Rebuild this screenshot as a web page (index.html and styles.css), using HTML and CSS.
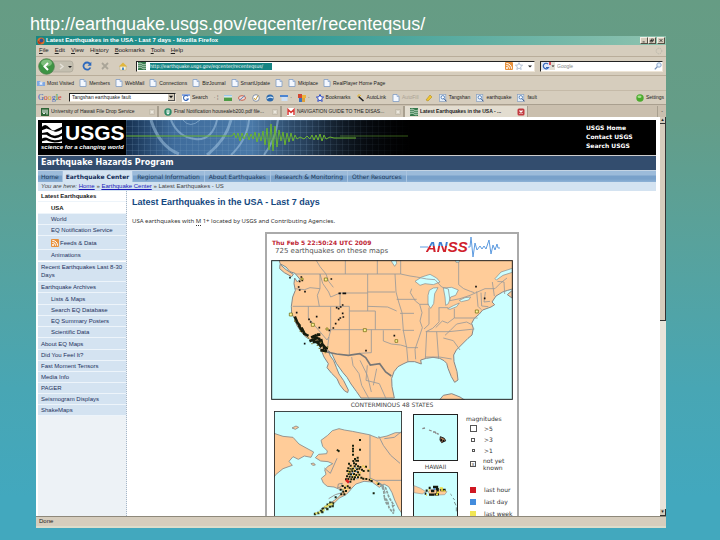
FILE: index.html
```html
<!DOCTYPE html>
<html lang="en">
<head>
<meta charset="utf-8">
<title>Latest Earthquakes in the USA</title>
<link rel="stylesheet" href="styles.css">
</head>
<body>
<svg class="defs" width="0" height="0" aria-hidden="true">
  <symbol id="doc" viewBox="0 0 8 8"><path d="M1 .5h4l2 2v5H1z" fill="#f4f8ff" stroke="#7f9cc4" stroke-width=".8"/><path d="M5 .5v2h2" fill="#c5d6ee" stroke="#7f9cc4" stroke-width=".6"/></symbol>
  <symbol id="rss" viewBox="0 0 8 8"><rect width="8" height="8" rx="1" fill="#e8913c"/><circle cx="2" cy="6" r="1" fill="#fff"/><path d="M1.3 3.4a3.3 3.3 0 0 1 3.3 3.3M1.3 1.4a5.3 5.3 0 0 1 5.3 5.3" fill="none" stroke="#fff"/></symbol>
  <symbol id="find" viewBox="0 0 8 8"><rect x=".4" y=".4" width="6.4" height="7" fill="#e3edf8" stroke="#8aa0c0" stroke-width=".7"/><circle cx="3.8" cy="3.3" r="1.7" fill="#fff" stroke="#3c6fae" stroke-width=".8"/><path d="M5 4.6 7.4 7.3" stroke="#2c4f88"/></symbol>
  <symbol id="gbox" viewBox="0 0 8 8"><rect width="8" height="8" fill="#fff"/><path d="M0 0h8v2H0z" fill="#8ba8e0"/><path d="M6 2.4A2.5 2.5 0 1 0 6.3 5H4.4" fill="none" stroke="#3465b8" stroke-width="1.1"/></symbol>
  <symbol id="usgs" viewBox="0 0 8 8"><rect width="8" height="8" fill="#35784b"/><path d="M0 2q2-2 4 0t4 0M0 4q2-2 4 0t4 0M0 6q2-2 4 0t4 0" fill="none" stroke="#d5ead9" stroke-width=".8"/></symbol>
  <symbol id="close" viewBox="0 0 6 6"><rect x=".4" y=".4" width="5.2" height="5.2" rx="1" fill="#d9d3c6" stroke="#b3ab9b" stroke-width=".6"/><path d="m2 2 2 2m0-2-2 2" stroke="#f4f0e8" stroke-width=".7"/></symbol>
</svg>

<h1 class="slide-title">http://earthquake.usgs.gov/eqcenter/recenteqsus/</h1>

<div class="window">
  <header class="titlebar">
    <svg class="i8" viewBox="0 0 8 8"><circle cx="4" cy="4" r="3.600" fill="#e0702a"/><circle cx="4.500" cy="3.500" r="2" fill="#35508f"/><path d="M.6 3Q2 5 5 5.500Q3 8 1 6z" fill="#b33a1c"/></svg>
    <span class="caption">Latest Earthquakes in the USA - Last 7 days - Mozilla Firefox</span>
    <button aria-label="Minimize"><svg viewBox="0 0 8 7"><path d="M2 5.500h3" stroke="#111"/></svg></button>
    <button aria-label="Restore"><svg viewBox="0 0 8 7"><path d="M3 1.500h3v2.500H3zM1.500 3.500h3v2H1.500z" fill="none" stroke="#111" stroke-width=".9"/></svg></button>
    <button class="x" aria-label="Close window"><svg viewBox="0 0 8 7"><path d="m2 1.500 4 4m0-4-4 4" stroke="#111"/></svg></button>
  </header>

  <nav class="menubar">
    <button><u>F</u>ile</button><button><u>E</u>dit</button><button><u>V</u>iew</button><button>Hi<u>s</u>tory</button><button><u>B</u>ookmarks</button><button><u>T</u>ools</button><button><u>H</u>elp</button>
    <svg class="i8 end" viewBox="0 0 8 8"><circle cx="4" cy="4" r="2.800" fill="none" stroke="#b9b6aa" stroke-width="1" stroke-dasharray="1.200 .8"/></svg>
  </nav>

  <div class="navbar">
    <button class="back" aria-label="Back and forward"><svg viewBox="0 0 36 17"><rect x="8" y="3" width="27" height="11" rx="3" fill="#c4bfb0" stroke="#aaa596" stroke-width=".7"/><circle cx="8.500" cy="8.500" r="7.800" fill="#3d9444" stroke="#4d7f4c" stroke-width=".8"/><ellipse cx="8.500" cy="5" rx="5.500" ry="3.500" fill="#7dbe7c"/><path d="m10 5-3.500 3.500L10 12" fill="none" stroke="#fff" stroke-width="2"/><path d="m22 6 3 2.500-3 2.500" fill="none" stroke="#e5e2d9" stroke-width="1.500"/><path d="M30 8h4l-2 2z" fill="#222"/></svg></button>
    <button aria-label="Reload"><svg viewBox="0 0 10 10"><path d="M8 3A3.600 3.600 0 1 0 8.400 6.500" fill="none" stroke="#2e69bd" stroke-width="1.800"/><path d="M9.300.8v4H5.500z" fill="#2e69bd"/></svg></button>
    <button aria-label="Stop"><svg viewBox="0 0 10 10"><path d="m2 2 6 6m0-6-6 6" stroke="#aaa598" stroke-width="1.800"/></svg></button>
    <button aria-label="Home"><svg viewBox="0 0 10 10"><path d="M2 5h6v4H2z" fill="#f9f3da" stroke="#b7a976" stroke-width=".5"/><path d="M.8 5.500 5 1.500l4.200 4z" fill="#e0b63e"/><path d="M4 6.500h2V9H4z" fill="#4e8cc4"/></svg></button>
    <div class="field address">
      <svg class="i8" viewBox="0 0 8 8"><use href="#usgs"/></svg>
      <input type="text" aria-label="Address" value="http://earthquake.usgs.gov/eqcenter/recenteqsus/">
      <svg class="i8 end" viewBox="0 0 8 8"><use href="#rss"/></svg>
      <svg class="i8" viewBox="0 0 8 8"><path d="m4 .6 1 2.400 2.600.2-2 1.700.6 2.600L4 6.100 1.800 7.500l.6-2.600-2-1.700L3 3z" fill="#fff" stroke="#8ba0bd" stroke-width=".6"/></svg>
      <svg class="i8" viewBox="0 0 8 8"><path d="M3 3.500h4l-2 2z" fill="#222"/></svg>
    </div>
    <div class="field search">
      <svg class="gpick" viewBox="0 0 14 8"><rect width="14" height="8" fill="#e4dfd4"/><rect x="1" width="8" height="8" fill="#dfe7f8"/><path d="M7 2A2.800 2.800 0 1 0 7.500 5.500H5" fill="none" stroke="#3465b8" stroke-width="1.200"/><path d="M8 0h2v3H8z" fill="#d64d5c"/><path d="M10.500 3.500h3L12 5z" fill="#222"/></svg>
      <input type="text" aria-label="Search the web" placeholder="Google">
      <svg class="i8" viewBox="0 0 8 8"><circle cx="5" cy="3" r="2.200" fill="#e6f0fb" stroke="#8da7cc"/><path d="M3.300 4.700.8 7.400" stroke="#7892b8" stroke-width="1.300"/></svg>
    </div>
  </div>

  <nav class="bookmarks">
    <a href="#"><svg class="i8" viewBox="0 0 8 8"><path d="M0 2h3l1 1h4v4H0z" fill="#7fa8e2"/><path d="m4 2 .7 1.500 1.600.1-1.200 1 .4 1.600L4 5.400l-1.500.8.4-1.600-1.200-1 1.600-.1z" fill="#e4edfb"/></svg>Most Visited</a>
    <a href="#"><svg class="i8"><use href="#doc"/></svg>Members</a>
    <a href="#"><svg class="i8"><use href="#doc"/></svg>WebMail</a>
    <a href="#"><svg class="i8"><use href="#doc"/></svg>Connections</a>
    <a href="#"><svg class="i8"><use href="#doc"/></svg>BizJournal</a>
    <a href="#"><svg class="i8"><use href="#doc"/></svg>SmartUpdate</a>
    <a href="#" aria-label="Untitled bookmark"><svg class="i8"><use href="#doc"/></svg></a>
    <a href="#"><svg class="i8"><use href="#doc"/></svg>Mktplace</a>
    <a href="#"><svg class="i8"><use href="#doc"/></svg>RealPlayer Home Page</a>
  </nav>

  <div class="googlebar">
    <span class="glogo"><b class="b">G</b><b class="r">o</b><b class="y">o</b><b class="b">g</b><b class="g">l</b><b class="r">e</b></span>
    <div class="field query"><input type="text" aria-label="Google query" value="Tangshan earthquake fault"><button aria-label="Show history"><svg viewBox="0 0 7 7"><path d="M1 2h5L3.500 5z" fill="#111"/></svg></button></div>
    <button><svg class="i8"><use href="#gbox"/></svg>Search</button>
    <span class="sep">· ¦</span>
    <button aria-label="News"><svg class="i8" viewBox="0 0 8 8"><path d="M0 1.500h8v5H0z" fill="#fff"/><path d="M0 3.500h8v3.500H0z" fill="#4d9b45"/><path d="M0 1h8v1.500H0z" fill="#9cc8e8"/></svg></button>
    <button aria-label="Popups"><svg class="i8" viewBox="0 0 8 8"><ellipse cx="4" cy="4" rx="3.500" ry="2.300" fill="#f5dcd6" stroke="#c65f4c"/><path d="M1 6.500 7 1.500" stroke="#5c8ac0"/></svg></button>
    <button aria-label="PageRank"><svg class="i8" viewBox="0 0 8 8"><circle cx="4" cy="4" r="3.300" fill="#fff" stroke="#6c7e9a" stroke-width=".8"/><path d="m2 4 1.500 2L6 1.500" fill="none" stroke="#c79a36"/></svg></button>
    <button aria-label="Earth"><svg class="i8" viewBox="0 0 8 8"><circle cx="4" cy="4" r="3.600" fill="#2e6bad"/><path d="M1 4.500Q4 2 7 4" stroke="#d1e6f7" stroke-width="1.300" fill="none"/></svg></button>
    <button aria-label="Send"><svg class="i8" viewBox="0 0 8 8"><path d="M0 1h8v2H0z" fill="#4c84d0"/><path d="M1.500 3h6v4h-6z" fill="#cfe0f4"/></svg>·</button>
    <button aria-label="Photos"><svg class="i8" viewBox="0 0 8 8"><path d="M0 0h4v4H0z" fill="#d24632"/><path d="M4 1h4v3H4z" fill="#ecb33a"/><path d="M1 4h3v4H1z" fill="#3e73bd"/><path d="M4 4h3v4H4z" fill="#dfa03a"/></svg>·</button>
    <button><svg class="i8" viewBox="0 0 8 8"><path d="m4 .5 1.100 2.300 2.500.3-1.900 1.700.5 2.600L4 6.100 1.800 7.400l.5-2.600L.4 3.100l2.500-.3z" fill="#fff" stroke="#2746c4"/></svg>Bookmarks</button>
    <button><svg class="i8" viewBox="0 0 8 8"><path d="m1.500 2.500 5 4.500" stroke="#222" stroke-width="1.600"/><path d="M2 0v2M0 2h2M4 1 3 2" stroke="#e2b331"/></svg>AutoLink</button>
    <button class="off"><svg class="i8"><use href="#doc"/></svg>AutoFill</button>
    <button aria-label="Highlight"><svg class="i8" viewBox="0 0 8 8"><path d="M1 6 5 1l2 2-4 4z" fill="#f0c531" stroke="#b08d23" stroke-width=".6"/></svg></button>
    <button><svg class="i8"><use href="#find"/></svg>Tangshan</button>
    <button><svg class="i8"><use href="#find"/></svg>earthquake</button>
    <button><svg class="i8"><use href="#find"/></svg>fault</button>
    <button class="end"><svg class="i8" viewBox="0 0 8 8"><circle cx="4" cy="4" r="3.700" fill="#4bab2e"/><ellipse cx="3.500" cy="2.700" rx="2" ry="1.300" fill="#a9e08f"/></svg>Settings</button>
  </div>

  <nav class="tabs">
    <a href="#"><svg class="i8" viewBox="0 0 8 8"><rect width="8" height="8" fill="#2c6434"/><path d="M2 1.500V5q1 1.500 2 0V1.500M6 1.500v5" stroke="#fff" fill="none"/></svg><span>University of Hawaii File Drop Service</span><svg class="i6"><use href="#close"/></svg></a>
    <a href="#"><svg class="i8" viewBox="0 0 8 8"><circle cx="4" cy="4" r="3.700" fill="#2e8a67"/><path d="M4 1.500v5M3 2v3.500h2V2" stroke="#fff" stroke-width=".8" fill="none"/></svg><span>Final Notification housealeb200.pdf file...</span><svg class="i6"><use href="#close"/></svg></a>
    <a href="#"><svg class="i8" viewBox="0 0 8 8"><rect width="8" height="8" fill="#fff"/><path d="M1 7V1.500l3 3 3-3V7" stroke="#d83a36" stroke-width="1.500" fill="none"/></svg><span>NAVIGATION GUIDE TO THE DISAS...</span><svg class="i6"><use href="#close"/></svg></a>
    <a href="#" class="on"><svg class="i8"><use href="#usgs"/></svg><span>Latest Earthquakes in the USA - ...</span><svg class="i8" viewBox="0 0 8 8"><rect x=".5" y=".5" width="7" height="7" rx="1.500" fill="#c23a40"/><path d="m2.500 2.500 3 3m0-3-3 3" stroke="#fff" stroke-width="1.200"/></svg></a>
    <button class="end" aria-label="List tabs">-</button>
  </nav>

  <div class="viewport">
    <div class="page">
      <header class="banner">
        <div class="logo">
          <div class="mark"><svg viewBox="0 0 22 22"><rect width="22" height="22" fill="#fff"/><path d="M0 4q4-4 8 1t8 2l6-3v3q-5 4-9 2T5 6L0 8zM0 11l6-1q4 4 8 4t8-3v3q-6 4-11 2t-6-3H0zM0 17q4-2 7 0t7 2 8-1v2q-7 2-11 1t-6-2L0 20z" fill="#000"/></svg><strong>USGS</strong></div>
          <em>science for a changing world</em>
        </div>
        <svg class="wave" viewBox="0 0 300 35">
          <defs>
            <linearGradient id="sky"><stop offset="0" stop-color="#152f4e"/><stop offset=".16" stop-color="#3f6c9c"/><stop offset=".42" stop-color="#4a79a8"/><stop offset=".56" stop-color="#2c4866"/><stop offset=".8" stop-color="#101a26"/><stop offset="1" stop-color="#000"/></linearGradient>
            <pattern id="grid" width="6" height="6" patternUnits="userSpaceOnUse"><path d="M0 .5h6M.5 0v6" stroke="#88aac8" stroke-opacity=".28" stroke-width=".6"/></pattern>
            <linearGradient id="fade"><stop offset=".6" stop-color="#000" stop-opacity="0"/><stop offset=".95" stop-color="#000"/></linearGradient>
          </defs>
          <rect width="300" height="35" fill="url(#sky)"/>
          <rect width="300" height="35" fill="url(#grid)"/>
          <g fill="none" stroke="#a8c9e6" stroke-opacity=".5"><path d="M45 0Q52 17 69 19T91 0" stroke-width="2"/><path d="M25 0Q33 26 53 34M81 35Q100 20 105 0" stroke-width="3"/><path d="M57 0q7 9 17 0"/><path d="M105 35Q121 20 123 0M138 35q12-16 14-35" stroke-width="2"/></g>
          <rect width="300" height="35" fill="url(#fade)"/>
          <path d="M0 16h106l2-3 2 5 2-5 2 8 2-8 2 6 3-6 2 7 2-6 2 5 2-7 2 10 2-9 2 8 2-10 2 14 2-17 2 22 2-26 2 27 2-25 2 21 2-17 2 11 2-9 2 13 2-12 2 9 2-9 2 8 2-6 2 4 3-2 4 2 3-3 3 3 2-4 2 5 2-5 2 5 2-6 2 7 2-6 2 4 4-2 4 1h22" fill="none" stroke="#6bb52f"/>
          <path d="M214 16h68" stroke="#6bb52f" stroke-opacity=".5"/>
        </svg>
        <nav class="quick"><a href="#">USGS Home</a><a href="#">Contact USGS</a><a href="#">Search USGS</a></nav>
      </header>
      <div class="program">Earthquake Hazards Program</div>
      <nav class="sections"><a href="#">Home</a><a href="#" class="on">Earthquake Center</a><a href="#">Regional Information</a><a href="#">About Earthquakes</a><a href="#">Research &amp; Monitoring</a><a href="#">Other Resources</a></nav>
      <div class="crumbs"><i>You are here:</i> <a href="#">Home</a> » <a href="#">Earthquake Center</a> » Latest Earthquakes - US</div>
      <div class="columns">
        <nav class="side">
          <ul>
            <li class="head"><a href="#">Latest Earthquakes</a>
              <ul>
                <li class="here"><a href="#">USA</a></li>
                <li><a href="#">World</a></li>
                <li><a href="#">EQ Notification Service</a></li>
                <li class="feed"><a href="#"><svg class="i8"><use href="#rss"/></svg>Feeds &amp; Data</a></li>
                <li><a href="#">Animations</a></li>
              </ul></li>
            <li class="tall"><a href="#">Recent Earthquakes Last 8-30 Days</a></li>
            <li><a href="#">Earthquake Archives</a>
              <ul>
                <li><a href="#">Lists &amp; Maps</a></li>
                <li><a href="#">Search EQ Database</a></li>
                <li><a href="#">EQ Summary Posters</a></li>
                <li><a href="#">Scientific Data</a></li>
              </ul></li>
            <li><a href="#">About EQ Maps</a></li>
            <li><a href="#">Did You Feel It?</a></li>
            <li><a href="#">Fast Moment Tensors</a></li>
            <li><a href="#">Media Info</a></li>
            <li><a href="#">PAGER</a></li>
            <li><a href="#">Seismogram Displays</a></li>
            <li><a href="#">ShakeMaps</a></li>
          </ul>
        </nav>
        <main>
          <h2>Latest Earthquakes in the USA - Last 7 days</h2>
          <p>USA earthquakes with <abbr title="Magnitude">M</abbr> 1+ located by USGS and Contributing Agencies.</p>
          <section class="panel">
            <header>
              <div><strong>Thu Feb 5 22:50:24 UTC 2009</strong><span>725 earthquakes on these maps</span></div>
              <div class="anss"><svg viewBox="0 0 80 22"><path d="M0 11h8M48 11h2l1-10 2 20 2-14 2 7 3-4 2 3 2-3 2 3 3-9 2 14 2-9 2 5 2-6 1 4h2" fill="none" stroke="#5d9be0"/></svg><b><span>AN</span>SS</b></div>
            </header>
            <svg class="us" viewBox="33 94 726 420">
              <rect x="33" y="94" width="726" height="420" fill="#cff"/>
              <g fill="#fc9" stroke="#888" stroke-width="3" stroke-linejoin="round">
                <path d="M57 90l3 15 18 10 12 14 15 5 15 18-8 8-8-12-2 17 4 20-8 20-4 28 1 22 8 14 7 20 13 20 13 15 22 13 20 6 5 20 9 22 13 20-4 12 14 17 16 16 8 18 14 18 10 6 2-8-14-28-14-20-8-20-8-20-10-14-6-16 10 8 14 30 20 28 12 14 12 20 16 22 14 20h100l-7-34-1-25 7-20 12-15 15-8 15-7 20 0 20 7-2-12 17-5 20-3 20 3 13 7 8 8 4 15 10 25 10 17 10-7-3-25-9-30-1-20 8-15 15-15 20-20 12-10 4-20-5-15 8-15 15-13 10-12 25-9 11-7-8-8 12-18 20-12 15-5 22-6V90z"/>
                <path d="M535 518l15-18 25-5 25 10 20 13zM60 107l18 16 22 14-5 7-22-12-14-12z"/>
                <path d="M742 198l14-12v22z"/>
              </g>
              <g fill="#cff" stroke="#888" stroke-width="2">
                <path d="M465 158l20-13 25-8 20 11 10 12-20 8-25-3-15 5zM508 185l12-7 14-1-10 18-3 30-9 14-8-12v-27zM550 178l25-2 20 8-8 16-15 5-7 20-8 5-2-25zM563 240l17-9 18-8-8 11-20 8zM598 215l17-8 17-2-6 9-22 5zM705 150l18-20 34-11v12l-28 9-20 14zM394 98l10 15 6-9-3-14zM585 92h15l-3 9h-9z"/>
              </g>
              <g fill="none" stroke="#999" stroke-width="2.500">
                <path d="M105 136h317l28 6 20 3 30 6 25 2 20 22 20 6 5 35 30-6 30-10 45-20h30l18-18 18-14M256 94v42M352 94v42M422 94v42M168 94l12 20 18 22 8 22 14 18M596 100v68l15 12 20 8 12 4"/>
                <path d="M104 180l30 3 16-6 30 3M98 233h114M180 136v44l-8 20 6 33M180 136l8 28 18 26 6 15 28-12h83M323 136v111M240 193v40M212 233v72M212 233l56 0v14M145 233v35l56 66 6-10 5-19M268 247v130M268 247h78v56M212 303h210M334 303v69l-34 2M207 325l-6 44M323 190h82M323 233l60 2 27 12M405 136l3 54 8 30 10 32 4 53M370 305v32l24 9 28 3 20 6M430 305l10 52 4 44M410 212h60M420 254h42M442 357h32M428 305h34M455 180l-4 12 15 25 13 10M479 227h28M479 227l7 25-6 25 7 20-10 30-12 35 2 30M507 237l0 50-15 14M537 237v42M538 279l-20 20-20 10M536 237h28M583 240v28h70M583 268l-20 15-16-6-20 20M497 309h70l76-8M500 309l-4 82M530 309l6 82M496 385h42l37 6M550 328l30 8 20 28M555 320l15-14 20-20 30-6 15 8M650 188l4 45 10 10M663 192l2 40 20 2M676 190l-4 30 18-2M697 160l6 42M712 158l20 2 2 36"/>
                <path d="M275 385l4 25 18 25 8 35 22 40M300 395l22 45 12 50M322 410l-4 45 40 10 20 45M350 420l-10 50"/>
              </g>
              <path d="M200 370l30 6 35 4 34-5 18 12 14 22 28-4 18 25 17 12" fill="none" stroke="#777" stroke-width="5"/>
              <g fill="none" stroke-linecap="square">
                <path d="M90 147h0M124 145h0M127 155h0M119 158h0M116 175h0M119 184h0M135 189h0M214 151h0M238 194h2M250 194h6M248 229h0M242 235h0M236 240h0M230 237h0M248 254h0M250 265h0M241 268h0M236 273h0M170 264h0M147 272h0M152 280h0M110 252h0M178 297h0M227 285h0M220 298h0M208 305h0M134 345h0M318 366h0M403 321h0M648 174h0M674 209h0" stroke="#111" stroke-width="5"/>
                <path d="M106 267l5 12M112 282l6 7M118 293l7 12M126 300l7 14M134 316l8 4M157 325l10-5M165 325l12 5M152 336l20-8M175 318h2M162 340l15-2M174 344l8 8M184 335l3 14M190 350l8 10M185 365l12 2M192 358h8" stroke="#171c0d" stroke-width="8"/>
                <path d="M104 277h0M121 308h0M145 328h0M172 350h0M178 359h0M196 372h0M183 341h0M156 345h0M203 355h0" stroke="#857d35" stroke-width="4"/>
              </g>
              <g fill="#fff79a" stroke="#665f00" stroke-width="2"><path d="M88 253h9v9h-9zM193 148h9v9h-9zM310 300h9v9h-9zM154 284h9v9h-9zM198 298h6v6h-6zM646 244h9v9h-9zM405 333h8v8h-8zM123 148h6v6h-6z"/></g>
              <rect x="35" y="96" width="722" height="416" fill="none" stroke="#222" stroke-width="3"/>
            </svg>
            <div class="cap">CONTERMINOUS 48 STATES</div>
            <div class="lower">
              <svg class="ak" viewBox="41 37 384 345">
                <rect x="41" y="37" width="384" height="345" fill="#cff"/>
                <g fill="#fc9" stroke="#888" stroke-width="2.500" stroke-linejoin="round">
                  <path d="M38 103l30 10 30 3 18 20 18 10 26 14-8 16-20-4-18 10-16-8-12 14 10 12-28 10-22 18-8 12zM182 125l20-15 14-14 20-6 16 4 24 4 50 10 26 10 28-6 25-10 45 0v260l-20-10-15-22-12-26-8-22-10-18-14-8-14 10-22-16-24-2-24 8-12 12-8 10-10 10-20 10-15 15-40 18 40-26 15-12 12-20-14-2-14-6-20-2-12-10-6-14 14-12-4-14 10-10 14-8-14-6-22-2-16-10 10-10 24-2 2-8-14-14zM95 88l12-6 8 4-10 6zM152 195l8-2 5 6-8 1zM234 256l12-2-4 10-10 4z"/>
                </g>
                <path d="M329 108v130l18 8 20 14 8 24M192 208l18 16 20-45M355 112l14 28 22 30 28 24M372 120l30-4 25-20M345 245h80M205 300l20-12 20-6" fill="none" stroke="#999" stroke-width="3"/>
                <path d="M360 255l10 20 2 20 10 12 4 20 14 18M354 252l22 16 10 28 16 26M372 298l8 20M396 318l6 24" stroke="#8b9c98" stroke-width="5" stroke-dasharray="9 3" fill="none"/>
                <g fill="none" stroke-linecap="square">
                  <path d="M299 124h0M278 141h0M278 150h0M278 158h0M278 168h0M299 153h0M232 155l3 2M292 177h0M284 181h0M288 186h0M279 187h0M293 186h0M281 194h0M287 197h0M266 195h0M271 201h0M293 203h0M283 203h0M264 209h0M271 212h0M278 210h0M290 212h0M297 210h0M261 217h0M268 219h0M276 218h0M284 217h0M293 221h0M265 226h0M272 227h0M281 226h0M288 229h0M297 228h0M260 233h0M268 234h0M276 235h0M284 236h0M293 236h0M264 241h0M273 242h0M281 242h0M257 242h0M270 249h0M300 205h0M305 213h0M317 204h0M310 217h0M324 216h0M303 237h0M309 240h0M318 241h0M328 243h0M334 247h0M354 256h0M247 262h0M254 267h0M262 263h0M268 267h0M241 273h0M249 279h0M257 277h0M252 287h0M243 287h0M226 296h0M340 284h0" stroke="#18210e" stroke-width="6"/>
                  <path d="M275 206h0M288 207h0M269 214h0M281 213h0M292 230h0M279 231h0M308 202h0M300 222h0M313 206h0M327 213h0M258 261h0M250 272h0M261 270h0M265 222h0M331 242h0M350 253h0" stroke="#e0cf3a" stroke-width="4"/>
                  <path d="M286 208h0M288 219h0M272 231h0M290 240h0M266 252h0M277 223h0" stroke="#5a90c8" stroke-width="4"/>
                  <path d="M218 314h0M210 312h0M202 318h0M209 324h0M217 322h0M196 326h0M188 331h0M201 331h0M182 337h0M174 343h0M186 340h0M164 346h0" stroke="#26331d" stroke-width="7"/>
                  <path d="M206 318l8-1M195 324l6-1M190 335h0M178 341h0M168 344h0" stroke="#e8e36a" stroke-width="6"/>
                  <path d="M260 246l3 3" stroke="#e02020" stroke-width="8"/>
                </g>
                <rect x="42" y="38" width="382" height="350" fill="none" stroke="#222" stroke-width="3"/>
              </svg>
              <div class="insets">
                <svg viewBox="70 47 135 141"><rect x="71.500" y="48.500" width="132" height="138" fill="#cff" stroke="#222" stroke-width="3"/><path d="M98 91l8-2M118 95l8 3M130 101h6l4 5M142 105l5 3" stroke="#888" stroke-width="4" fill="none"/><path d="M152 115l12 5 4 7-12 6-5-8z" fill="#a77852" stroke="#222" stroke-width="3"/><path d="M155 122v6M161 125v6M166 127v2" stroke="#111" stroke-width="4"/></svg>
                <div class="cap">HAWAII</div>
                <svg viewBox="70 222 135 141"><rect x="71.500" y="223.500" width="132" height="138" fill="#cff" stroke="#222" stroke-width="3"/><path d="M73 263l20 8 14 9-8 8-26-4zM115 282l10-8h35l12 7-7 9-42 2z" fill="#fc9" stroke="#999" stroke-width="2"/><path d="M108 278h6M117 270h6M124 279h10M130 267h12v10M105 287h5M118 290h15M144 270v20M152 276h16M134 289h14" stroke="#151b10" stroke-width="7" fill="none"/><path d="M117 276h4M142 283h7M150 270h7v10M109 291h3M139 289h6M161 279h6" stroke="#efdf3d" stroke-width="5" fill="none"/><path d="M134 270v6" stroke="#4287cf" stroke-width="5"/><path d="M182 288l5 5M190 300l5 6M194 312l5 10M200 328v12" stroke="#79918e" stroke-width="3"/></svg>
              </div>
              <div class="legend">
                <div>magnitudes</div>
                <ul>
                  <li><i class="box b5"></i>&gt;5</li>
                  <li><i class="box b3"></i>&gt;3</li>
                  <li><i class="box b1"></i>&gt;1</li>
                  <li class="two"><i class="box unk">x</i><span>not yet known</span></li>
                </ul>
                <ul class="ages">
                  <li><i class="box hour"></i>last hour</li>
                  <li><i class="box day"></i>last day</li>
                  <li><i class="box week"></i>last week</li>
                </ul>
              </div>
            </div>
          </section>
        </main>
      </div>
    </div>
    <div class="scroll"><i class="arrow">▴</i><i class="thumb"></i><i class="track"></i><i class="arrow">▾</i></div>
  </div>
  <footer class="status">Done</footer>
</div>
</body>
</html>
```

FILE: styles.css
```css
* { box-sizing: border-box; }
html, body { height: 100%; }
body {
  margin: 0;
  padding: 12px 54px 12px 36px;
  display: flex;
  flex-direction: column;
  overflow: hidden;
  background: linear-gradient(#669c84 0%, #649d88 22%, #58a29c 45%, #48a6b4 72%, #42a8be 92%);
  font: 5px/7px "Liberation Sans", Arial, sans-serif;
  color: #222;
}
a { color: inherit; text-decoration: none; }
ul { list-style: none; margin: 0; padding: 0; }
button { border: 0; padding: 0; margin: 0; background: none; font: inherit; color: inherit; display: flex; align-items: center; gap: 2px; }
input { border: 0; padding: 0; margin: 0; font: inherit; color: inherit; background: none; min-width: 0; outline: 0; }
svg { display: block; flex: none; }
.defs { position: absolute; }
.i8 { width: 8px; height: 8px; }
.i6 { width: 6px; height: 6px; }
.end { margin-left: auto; }

.slide-title { margin: 0 0 0 -6px; font-size: 18px; line-height: 24px; font-weight: 400; color: #fff; }

.window { flex: 1; min-height: 0; display: flex; flex-direction: column; background: #d6cdbd; }
.titlebar { height: 9px; padding: 0 1px; display: flex; align-items: center; background: linear-gradient(90deg, #188783, #2f9a96 40%, #8fc3af); color: #fff; font-weight: 700; }
.caption { flex: 1; padding-left: 1px; font-size: 6px; }
.titlebar button { width: 8px; height: 7px; background: #d6cdbd; border: 1px solid; border-color: #f5f0e6 #554f44 #554f44 #f5f0e6; }
.titlebar button svg { width: 6px; height: 5px; }
.titlebar .x { margin-left: 1px; }

.menubar { height: 12px; padding: 0 3px; display: flex; align-items: center; gap: 6px; border-bottom: 1px solid #b9ad9a; }
.menubar button { display: block; font-size: 6px; }

.navbar { height: 18px; padding: 0 3px 0 2px; display: flex; align-items: center; gap: 8px; }
.navbar button svg { width: 10px; height: 10px; }
.navbar .back svg { width: 36px; height: 17px; }
.field { display: flex; align-items: center; background: #fff; border: 1px solid; border-color: #222 #eee5d6 #eee5d6 #222; }
.address { flex: 1; height: 11px; padding: 0 1px; gap: 4px; margin-right: -3px; }
.address input { width: 122px; height: 7px; background: #168483; color: #fff; font-family: "DejaVu Sans Condensed", sans-serif; }
.address .end ~ .i8 { margin-left: -2px; }
.search { width: 123px; height: 11px; gap: 2px; }
.search input { flex: 1; }
.search input::placeholder { color: #888; }
.gpick { width: 14px; height: 8px; }

.bookmarks { height: 15px; padding-left: 1px; display: flex; align-items: center; gap: 5px; border-top: 1px solid #b9ad9a; }
.bookmarks a { display: flex; align-items: center; gap: 2px; }

.googlebar { height: 14px; padding: 0 2px; display: flex; align-items: center; gap: 6px; border-top: 1px solid #c5baa8; }
.glogo { font: 8px/10px "Liberation Serif", serif; width: 25px; }
.glogo b { font-weight: 400; }
.b { color: #315cc0; } .r { color: #cf3a30; } .y { color: #d9a21e; } .g { color: #309445; }
.query { width: 107px; height: 9px; padding-left: 2px; }
.query input { flex: 1; }
.query button { width: 7px; height: 7px; background: #d6cdbd; border-right: 1px solid #555; border-bottom: 1px solid #555; }
.query button svg { width: 6px; height: 6px; }
.sep { color: #555; white-space: nowrap; }
.off { color: #aaa294; }

.tabs { height: 13px; padding-top: 1px; display: flex; background: #cabfae; border-top: 1px solid #a99f8f; }
.tabs a { flex: 0 1 123px; min-width: 0; padding: 0 2px 0 5px; display: flex; align-items: center; gap: 2px; background: #d0c7b7; border-right: 2px solid #a89f8f; white-space: nowrap; }
.tabs a span { flex: 1; overflow: hidden; }
.tabs .on { background: #e3ddd0; font-weight: 700; border-right: 1px solid #a89f8f; }
.tabs button { width: 9px; justify-content: center; border-left: 1px solid #a89f8f; }

.viewport { flex: 1; min-height: 0; display: flex; overflow: hidden; background: #fff; }
.page { flex: 1; min-width: 0; margin: 3px 4px 0 2px; display: flex; flex-direction: column; }
.banner { height: 36px; display: flex; background: #000; border-bottom: 1px solid #ccc; color: #fff; }
.logo { width: 88px; padding: 2px 3px 0; }
.mark { display: flex; align-items: center; gap: 2px; height: 21px; }
.mark svg { width: 22px; height: 20px; }
.mark strong { font-size: 21px; line-height: 21px; }
.logo em { display: block; font-size: 6px; line-height: 9px; font-weight: 700; white-space: nowrap; }
.wave { width: 300px; height: 35px; }
.quick { margin-left: auto; width: 70px; padding-top: 3px; font: 700 6px/9px "DejaVu Sans", sans-serif; }
.quick a { display: block; }
.program { padding-left: 3px; font: 700 8px/14px "DejaVu Sans", sans-serif; color: #fff; background: #334d6e; border-bottom: 1px solid #c4d4e4; }
.sections { display: flex; font: 6px/11px "DejaVu Sans", sans-serif; color: #1b3859; background: linear-gradient(#9cbbda 0 4px, #79a1ca 5px 8px, #8eb2d6); }
.sections a { padding: 0 4px; border-right: 1px solid #a9c4e0; }
.sections a:first-child { padding: 0 3px; }
.sections .on { background: #d4e3f1; font-weight: 700; padding: 0 3px; color: #122c57; }
.crumbs { padding-left: 3px; font-size: 6px; line-height: 9px; background: #d4e3f1; color: #444; }
.crumbs a { color: #1a1ab8; text-decoration: underline; }
.columns { flex: 1; min-height: 0; display: flex; }

.side { width: 89px; flex: none; background: #edf2f6; border-right: 1px dotted #a6b6c8; font-size: 6px; line-height: 10px; color: #1c315c; }
.side li { background: #d4e3f1; border-bottom: 1px solid #edf4fa; }
.side a { padding-left: 3px; display: block; }
.side ul ul a { padding-left: 13px; }
.side li:has(ul) { border-bottom: 0; }
.side li:has(ul) > a { border-bottom: 1px solid #edf4fa; }
.side ul ul { padding: 1px 0; }
.side .head { background: #fff; }
.side .head > a, .side .here { font-weight: 700; color: #222; }
.side .here { background: #fff; }
.side .feed a { display: flex; align-items: center; gap: 1px; height: 13px; }
.side .tall a { line-height: 8px; padding: 1px 0 2px 3px; }

main { flex: 1; min-width: 0; padding: 6px 4px 0 5px; }
h2 { margin: 0; font-size: 9px; line-height: 10px; color: #14487f; }
p { margin: 10px 0 6px; font: 6px/9px "Noto Sans", sans-serif; color: #333; }
abbr { text-decoration: none; border-bottom: 1px dotted #333; }

.panel { width: 254px; margin: 0 auto; border: 2px solid #aaa; padding: 0 4px; }
.panel header { height: 26px; padding: 4px 13px 0 1px; display: flex; justify-content: space-between; font: 6px/9px "DejaVu Sans", sans-serif; }
.panel header strong { display: block; color: #bd1d32; }
.panel header div > span { display: block; padding-left: 3px; font-size: 7px; line-height: 8px; color: #555; }
.anss { display: grid; align-items: center; margin-top: -4px; }
.anss > * { grid-area: 1 / 1; }
.anss svg { width: 80px; height: 22px; }
.anss b { padding-left: 6px; font: italic 900 15px/20px "Liberation Sans", sans-serif; color: #d0202c; }
.anss b span { background: linear-gradient(#3d7fd0 50%, #d0202c 50%); background-clip: text; color: transparent; }
.us { width: 100%; }
.cap { text-align: center; font: 6px/9px "DejaVu Sans", sans-serif; color: #444; }
.lower { display: flex; padding: 2px 0 0 3px; }
.ak { width: 128px; height: 115px; margin-right: 11px; }
.insets { width: 45px; padding-top: 3px; margin-right: 8px; }
.insets svg { width: 45px; height: 47px; }
.insets .cap { line-height: 11px; }
.legend { padding-top: 4px; font: 6px/8px "DejaVu Sans", sans-serif; color: #333; }
.legend ul { padding-left: 4px; }
.legend li { height: 11px; display: flex; align-items: center; gap: 7px; white-space: nowrap; }
.legend .two { height: 16px; gap: 6px; }
.legend .two span { width: 24px; line-height: 7px; white-space: normal; }
.box { width: 6px; height: 6px; margin-right: 1px; flex: none; border: 1px solid #555; background: #fff; font: 5px/4px "Liberation Sans", sans-serif; text-align: center; }
.b5 { width: 7px; height: 7px; margin-right: 0; }
.b3 { width: 4px; height: 4px; margin: 0 2px 0 1px; }
.b1 { width: 3px; height: 3px; margin: 0 2px; }
.legend .ages { padding-top: 12px; }
.legend .ages li { height: 12px; }
.ages .box { border: 0; }
.hour { background: #cf1722; }
.day { background: #438cdd; }
.week { background: #f1e654; }

.scroll { width: 6px; display: flex; flex-direction: column; background: #e8e4da; }
.scroll i { background: #d6cdbd; border-right: 1px solid #333; border-bottom: 1px solid #333; font: 5px/5px "DejaVu Sans", sans-serif; }
.scroll .arrow { height: 7px; text-align: center; }
.scroll .thumb { flex: 197; }
.scroll .track { flex: 188; background: none; border: 0; }

.status { padding-left: 3px; font-size: 6px; line-height: 9px; border-top: 1px solid #8e887a; border-bottom: 2px solid #dcdccb; }
```
